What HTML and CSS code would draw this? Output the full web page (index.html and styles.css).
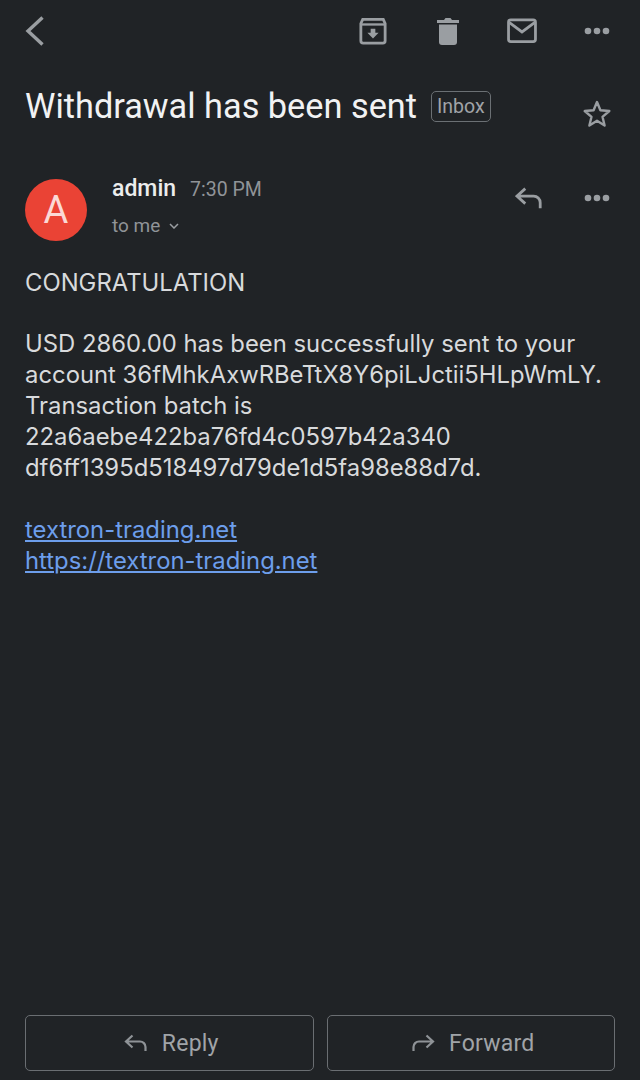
FILE: index.html
```html
<!DOCTYPE html>
<html lang="en">
<head>
    <meta charset="UTF-8">
    <meta name="viewport" content="width=device-width, initial-scale=1.0">
    <title>Withdrawal has been sent</title>
    <link rel="stylesheet" href="styles.css">
</head>
<body>
    <div class="page">
        <div class="topbar">
            <svg class="back" width="20" height="30" viewBox="0 0 20 30"><path d="M17.5 1.5 3 15l14.5 13.5" fill="none" stroke="#9a9ea2" stroke-width="3.4"/></svg>
            <div class="actions">
                <div class="action">
                    <svg width="28" height="30" viewBox="0 0 30 30"><path d="M4 2.500h22l2 4.500v18.500a2.500 2.500 0 0 1-2.500 2.500h-21A2.500 2.500 0 0 1 2 25.500V7z" fill="none" stroke="#9a9ea2" stroke-width="3"/><path d="M2 8h26" stroke="#9a9ea2" stroke-width="2.500"/><path d="M12.500 12.500h5v4.500h3.500L15 23l-6-6h3.500z" fill="#9a9ea2"/></svg>
                </div>
                <div class="action">
                    <svg width="24" height="30" viewBox="0 0 24 30"><path d="M1 4h7l1.500-2h5L16 4h7v3H1z" fill="#9a9ea2"/><path d="M3 8.500h18V26a3 3 0 0 1-3 3H6a3 3 0 0 1-3-3z" fill="#9a9ea2"/></svg>
                </div>
                <div class="action">
                    <svg width="30" height="26" viewBox="0 0 32 28"><rect x="1.500" y="2" width="29" height="23.500" rx="2.500" fill="none" stroke="#9a9ea2" stroke-width="3"/><path d="m2.500 5 13.500 10L29.500 5" fill="none" stroke="#9a9ea2" stroke-width="3"/></svg>
                </div>
                <div class="action">
                    <svg class="dots" width="26" height="8" viewBox="0 0 26 8"><circle cx="4" cy="4" r="3.300"/><circle cx="13" cy="4" r="3.300"/><circle cx="22" cy="4" r="3.300"/></svg>
                </div>
            </div>
        </div>

        <div class="subject">
            <h1>Withdrawal has been sent</h1>
            <span class="label">Inbox</span>
            <svg class="star" width="30" height="30" viewBox="0 0 30 30"><path d="m15 3 3.400 8.300 8.900.7-6.800 5.800 2.100 8.700L15 21.800l-7.600 4.700 2.100-8.700L2.700 12l8.900-.7z" fill="none" stroke="#9a9ea2" stroke-width="2.400" stroke-linejoin="round"/></svg>
        </div>

        <div class="sender">
            <div class="avatar">A</div>
            <div class="sender-info">
                <div class="sender-line">
                    <span class="sender-name">admin</span>
                    <span class="sender-time">7:30 PM</span>
                </div>
                <div class="recipient">
                    to me
                    <svg width="10" height="6" viewBox="0 0 10 6"><path d="m1 1 4 4 4-4" fill="none" stroke="#9a9ea2" stroke-width="1.500"/></svg>
                </div>
            </div>
            <div class="sender-actions">
                <svg width="28" height="24" viewBox="0 0 30 24"><path d="M11 2 2 10l9 8M2 10h18a7 7 0 0 1 7 7v6" fill="none" stroke="#9a9ea2" stroke-width="3"/></svg>
                <svg class="dots" width="26" height="8" viewBox="0 0 26 8"><circle cx="4" cy="4" r="3.300"/><circle cx="13" cy="4" r="3.300"/><circle cx="22" cy="4" r="3.300"/></svg>
            </div>
        </div>

        <div class="message">
            <p>CONGRATULATION</p>
            <p>USD 2860.00 has been successfully sent to your<br>
            account 36fMhkAxwRBeTtX8Y6piLJctii5HLpWmLY.<br>
            Transaction batch is<br>
            22a6aebe422ba76fd4c0597b42a340<br>
            df6ff1395d518497d79de1d5fa98e88d7d.</p>
            <p><a href="#">textron-trading.net</a><br>
            <a href="#">https://textron-trading.net</a></p>
        </div>

        <div class="footer">
            <button class="footer-btn">
                <svg width="24" height="18" viewBox="0 0 24 18"><path d="M8.500 1.500 2 7.500l6.500 6M2 7.500h14a5.500 5.500 0 0 1 5.500 5.500v4" fill="none" stroke="#8f9397" stroke-width="2.200"/></svg>
                Reply
            </button>
            <button class="footer-btn">
                <svg width="24" height="18" viewBox="0 0 24 18"><path d="M15.500 1.500 22 7.500l-6.500 6M22 7.500H8A5.500 5.500 0 0 0 2.500 13v4" fill="none" stroke="#8f9397" stroke-width="2.200"/></svg>
                Forward
            </button>
        </div>
    </div>
</body>
</html>
```

FILE: styles.css
```css
html, body {
    margin: 0;
    padding: 0;
}
body {
    background-color: #202326;
    font-family: Inter, "Liberation Sans", sans-serif;
}
.page {
    height: 1080px;
    display: flex;
    flex-direction: column;
    padding: 0 25px;
    box-sizing: border-box;
    overflow: hidden;
}
.topbar {
    height: 62px;
    display: flex;
    align-items: center;
    justify-content: space-between;
}
.actions {
    display: flex;
    align-items: center;
    margin-right: -19px;
}
.action {
    width: 74.500px;
    display: flex;
    justify-content: center;
}
.dots {
    fill: #9a9ea2;
}
.subject {
    height: 88px;
    display: flex;
    align-items: center;
}
.subject h1 {
    margin: 0;
    font-family: Roboto, sans-serif;
    font-size: 34.300px;
    font-weight: 400;
    color: #f1f2f3;
    white-space: nowrap;
}
.label {
    margin-left: 14px;
    padding: 0 5px;
    height: 31px;
    line-height: 29px;
    box-sizing: border-box;
    border: 1.500px solid #6b7074;
    border-radius: 5px;
    font-family: Roboto, sans-serif;
    font-size: 19.500px;
    color: #a0a4a8;
}
.star {
    margin-left: auto;
    margin-right: 3px;
    margin-top: 16px;
}
.sender {
    height: 62px;
    margin-top: 29px;
    display: flex;
}
.avatar {
    width: 62px;
    height: 62px;
    border-radius: 50%;
    background-color: #ea4335;
    color: #fbd9d6;
    font-family: Roboto, sans-serif;
    font-size: 38px;
    line-height: 62px;
    text-align: center;
}
.sender-info {
    margin-left: 25px;
    font-family: Roboto, sans-serif;
}
.sender-line {
    display: flex;
    align-items: baseline;
    gap: 14px;
    line-height: 20px;
}
.sender-name {
    font-size: 23px;
    font-weight: 500;
    color: #eceded;
}
.sender-time {
    font-size: 19.500px;
    color: #909498;
}
.recipient {
    margin-top: 15px;
    font-size: 19px;
    line-height: 22px;
    color: #909498;
    display: flex;
    align-items: center;
    gap: 9px;
}
.sender-actions {
    margin-left: auto;
    display: flex;
    align-items: center;
    gap: 41px;
    height: 38px;
    margin-right: 5px;
}
.message {
    margin-top: 25.500px;
    font-size: 23.850px;
    line-height: 31px;
    color: #d8dadc;
    white-space: nowrap;
}
.message p {
    margin: 0 0 30.500px;
}
.message a {
    color: #6d9eeb;
}
.footer {
    margin-top: auto;
    margin-bottom: 9px;
    display: flex;
    gap: 13px;
}
.footer-btn {
    flex: 1;
    height: 56px;
    display: flex;
    align-items: center;
    justify-content: center;
    gap: 14px;
    padding-left: 10px;
    background: none;
    border: 1.500px solid #6a6e72;
    border-radius: 5px;
    font-family: Roboto, sans-serif;
    font-size: 23px;
    font-weight: 400;
    letter-spacing: 0.200px;
    color: #a0a4a8;
}
```
